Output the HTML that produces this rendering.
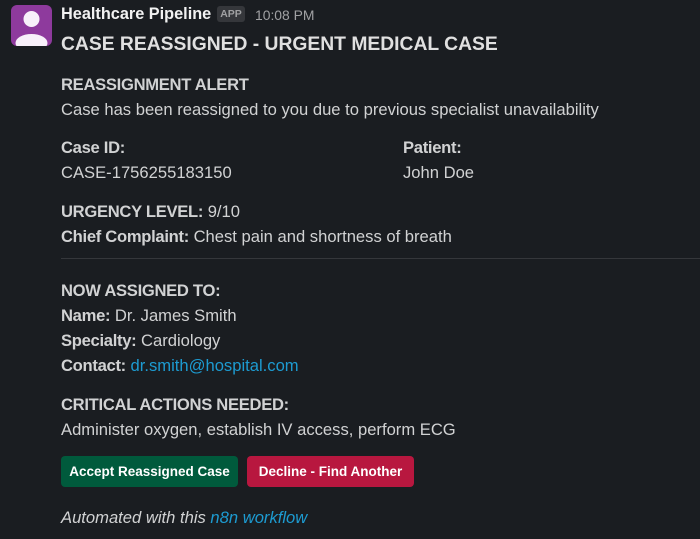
<!DOCTYPE html>
<html><head><meta charset="utf-8"><style>
html,body{margin:0;padding:0;background:#1a1d21;width:700px;height:539px;overflow:hidden}
body{font-family:"Liberation Sans",sans-serif;color:#d1d2d3;position:relative}
.l{position:absolute;left:61px;white-space:nowrap;font-size:16.6px;line-height:20px}
b{font-weight:bold;letter-spacing:-0.3px}
.a{color:#1d9bd1}
.btn{position:absolute;top:456px;height:31px;border-radius:4px;color:#fff;font-weight:bold;font-size:13.5px;line-height:31px;text-align:center}
</style></head><body>
<div style="position:absolute;left:11px;top:5px;width:41px;height:41px;border-radius:6px;background:#8e3a9d;overflow:hidden">
<svg width="41" height="41" viewBox="0 0 41 41"><circle cx="20.5" cy="14" r="8" fill="#f8f0fa"/><ellipse cx="20.5" cy="38" rx="16" ry="9" fill="#f8f0fa"/></svg></div>
<div class="l" style="top:4px;font-weight:bold;font-size:16.3px;color:#f2f2f2">Healthcare Pipeline</div>
<div style="position:absolute;left:217px;top:6px;width:28px;height:16px;background:#35373b;border-radius:3px;color:#a0a1a3;font-size:10.5px;font-weight:bold;line-height:16px;text-align:center">APP</div>
<div class="l" style="left:255px;top:5px;font-size:13.9px;color:#a0a1a3">10:08 PM</div>
<div class="l" style="top:33px;font-size:19.3px;line-height:24px;font-weight:bold;color:#e0e0e0">CASE REASSIGNED - URGENT MEDICAL CASE</div>
<div class="l" style="top:75px"><b>REASSIGNMENT ALERT</b></div>
<div class="l" style="top:100px">Case has been reassigned to you due to previous specialist unavailability</div>
<div class="l" style="top:138px"><b>Case ID:</b></div>
<div class="l" style="top:163px">CASE-1756255183150</div>
<div class="l" style="left:403px;top:138px"><b>Patient:</b></div>
<div class="l" style="left:403px;top:163px">John Doe</div>
<div class="l" style="top:202px"><b>URGENCY LEVEL:</b> 9/10</div>
<div class="l" style="top:227px"><b>Chief Complaint:</b> Chest pain and shortness of breath</div>
<div style="position:absolute;left:61px;right:0;top:258px;height:1px;background:#35373b"></div>
<div class="l" style="top:281px"><b>NOW ASSIGNED TO:</b></div>
<div class="l" style="top:306px"><b>Name:</b> Dr. James Smith</div>
<div class="l" style="top:331px"><b>Specialty:</b> Cardiology</div>
<div class="l" style="top:356px"><b>Contact:</b> <span class="a">dr.smith@hospital.com</span></div>
<div class="l" style="top:395px"><b>CRITICAL ACTIONS NEEDED:</b></div>
<div class="l" style="top:420px">Administer oxygen, establish IV access, perform ECG</div>
<div class="btn" style="left:61px;width:177px;background:#005a3c">Accept Reassigned Case</div>
<div class="btn" style="left:247px;width:167px;background:#b8173f">Decline - Find Another</div>
<div class="l" style="top:508px;font-style:italic">Automated with this <span class="a">n8n workflow</span></div>
</body></html>
